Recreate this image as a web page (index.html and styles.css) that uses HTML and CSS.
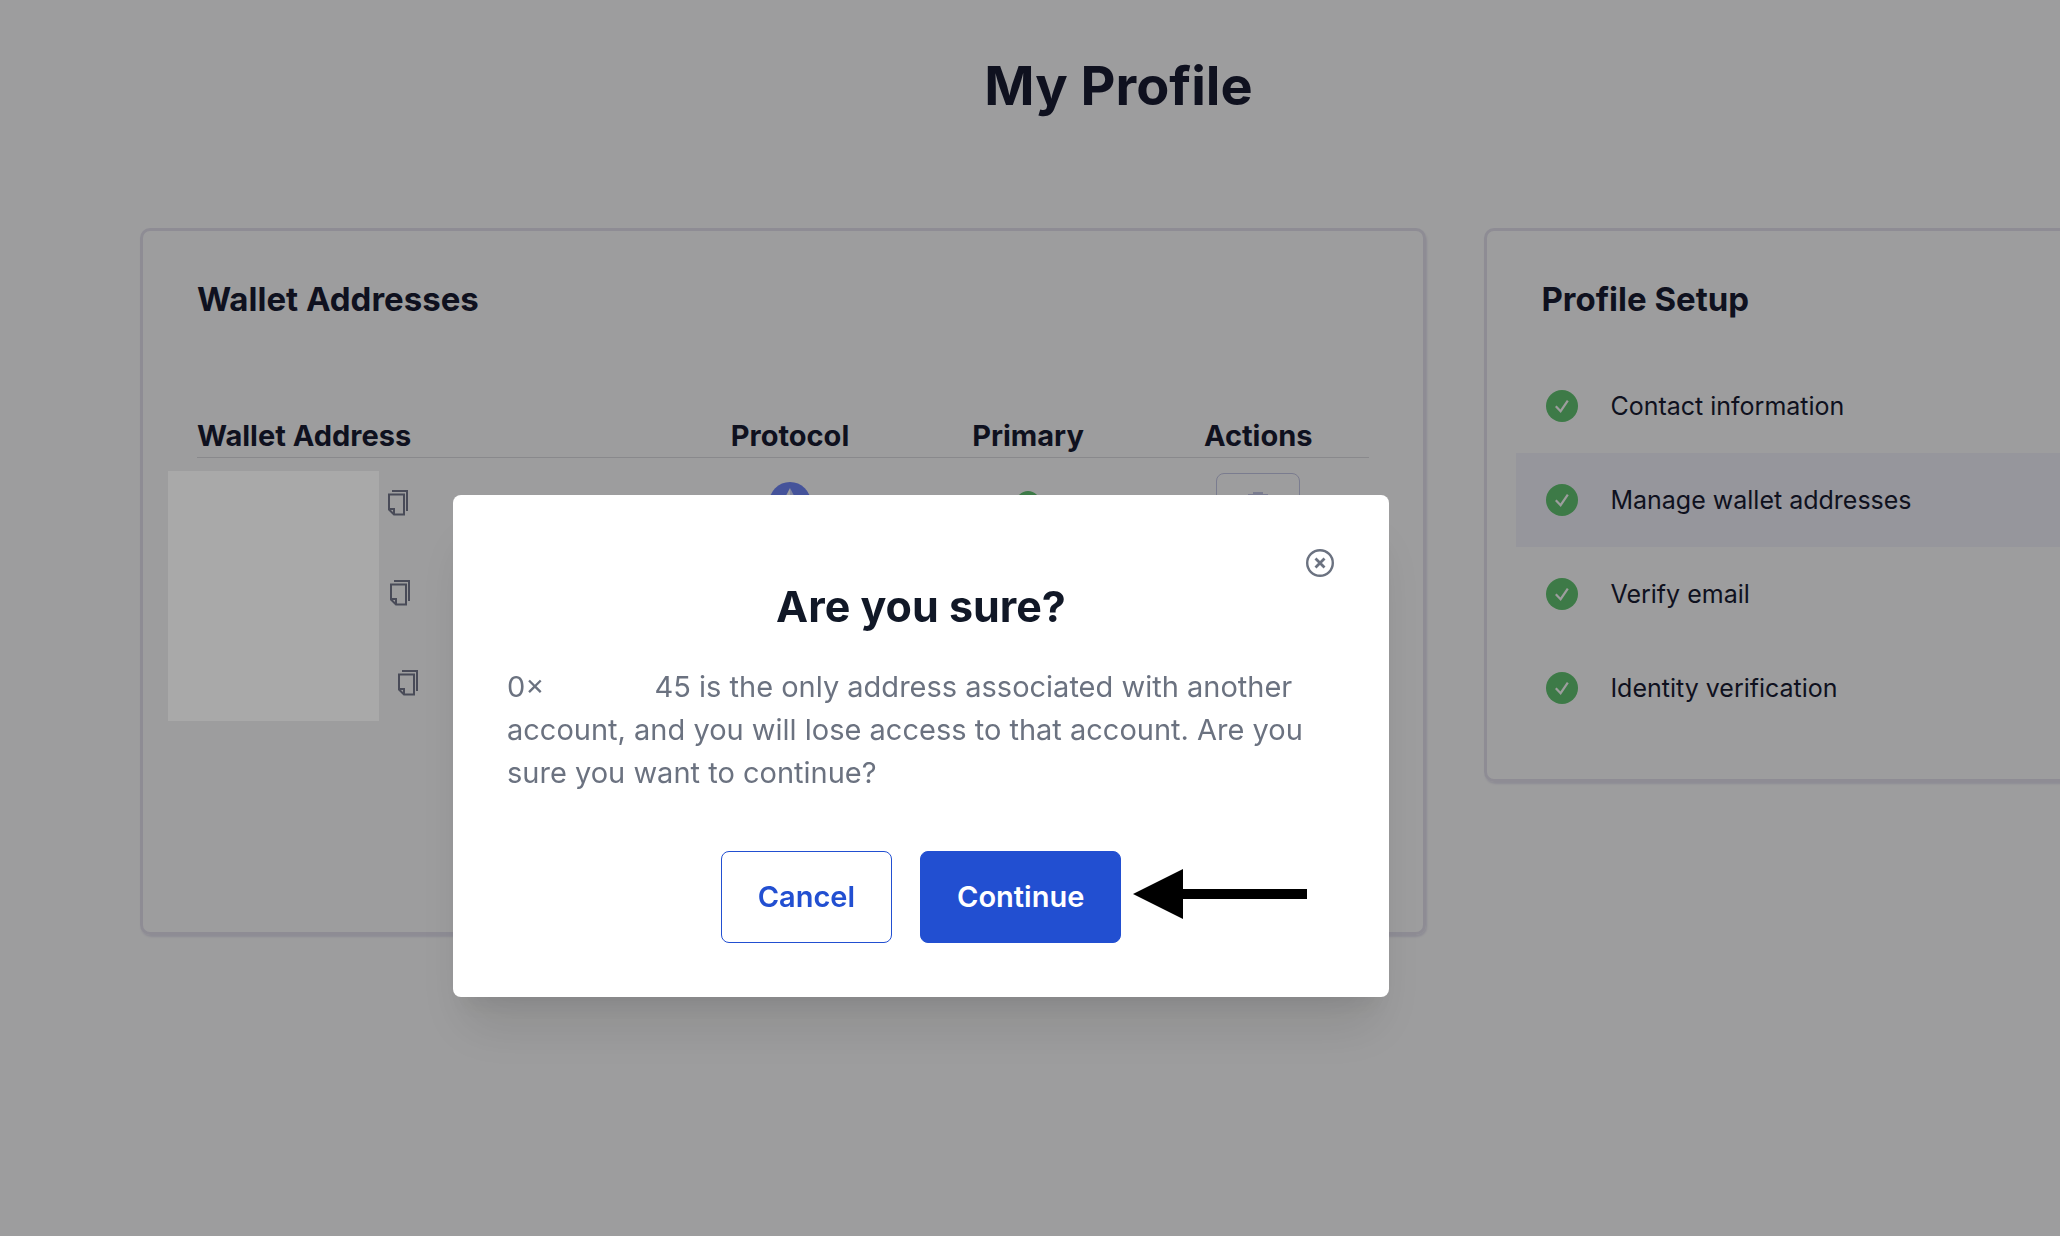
FILE: index.html
```html
<!DOCTYPE html>
<html lang="en">
<head>
    <meta charset="UTF-8">
    <title>My Profile</title>
    <link rel="stylesheet" href="styles.css">
</head>
<body>
    <svg class="sprite" aria-hidden="true">
        <symbol id="check" viewBox="0 0 32 32">
            <circle cx="16" cy="16" r="16" fill="#5cb96b"/>
            <path d="M9.800 16.200l4.800 5 7.200-10.600" fill="none" stroke="#ededee" stroke-width="2.200"/>
        </symbol>
        <symbol id="copy" viewBox="0 0 22 28">
            <path d="M2 5.500h15v20H7l-5-5zM2 20h5v5.500M5 2h15v20" fill="none" stroke="#6f7285" stroke-width="2"/>
        </symbol>
    </svg>

    <main class="page">
        <h1>My Profile</h1>
        <div class="cards">
            <section class="card">
                <h2>Wallet Addresses</h2>
                <table class="wallets">
                    <thead>
                        <tr>
                            <th class="col-address">Wallet Address</th>
                            <th class="col-mid">Protocol</th>
                            <th class="col-mid">Primary</th>
                            <th>Actions</th>
                        </tr>
                    </thead>
                    <tbody>
                        <tr>
                            <td>
                                <div class="address"><button class="copy" aria-label="Copy address"><svg><use href="#copy"/></svg></button></div>
                                <div class="mask"></div>
                            </td>
                            <td>
                                <svg class="eth" viewBox="0 0 42 42">
                                    <circle cx="21" cy="21" r="21" fill="#697de8"/>
                                    <path d="M21 6v11.500l-8 4z" fill="#ededee"/>
                                    <path d="M21 6l8 15.500-8-4z" fill="#c3c9ee"/>
                                    <path d="M13 23l8 4.500 8-4.500-8 12z" fill="#dfe2f2"/>
                                </svg>
                            </td>
                            <td><svg class="primary"><use href="#check"/></svg></td>
                            <td>
                                <button class="remove" aria-label="Remove address">
                                    <svg viewBox="0 0 24 24"><path d="M7 1h10v2h5v3H2V3h5zM4 8h16l-1 15H5z" fill="#b9bbd8"/></svg>
                                </button>
                            </td>
                        </tr>
                        <tr>
                            <td><div class="address address-mid"><button class="copy" aria-label="Copy address"><svg><use href="#copy"/></svg></button></div></td>
                            <td></td><td></td><td></td>
                        </tr>
                        <tr>
                            <td><div class="address address-long"><button class="copy" aria-label="Copy address"><svg><use href="#copy"/></svg></button></div></td>
                            <td></td><td></td><td></td>
                        </tr>
                    </tbody>
                </table>
            </section>

            <section class="card">
                <h2>Profile Setup</h2>
                <ul class="steps">
                    <li><svg><use href="#check"/></svg><a href="#contact">Contact information</a></li>
                    <li class="active"><svg><use href="#check"/></svg><a href="#wallets">Manage wallet addresses</a></li>
                    <li><svg><use href="#check"/></svg><a href="#email">Verify email</a></li>
                    <li><svg><use href="#check"/></svg><a href="#identity">Identity verification</a></li>
                </ul>
            </section>
        </div>
    </main>

    <div class="overlay">
        <div class="modal" role="dialog" aria-modal="true" aria-labelledby="modal-title">
            <button class="close" aria-label="Close">
                <svg viewBox="0 0 28 28" fill="none" stroke="#6b7280">
                    <circle cx="14" cy="14" r="12.800" stroke-width="2.400"/>
                    <path d="M9.500 9.500l9 9M18.500 9.500l-9 9" stroke-width="2.800"/>
                </svg>
            </button>
            <h3 id="modal-title">Are you sure?</h3>
            <p>0×<span class="hidden-part"></span>45 is the only address associated with another account, and you will lose access to that account. Are you sure you want to continue?</p>
            <div class="buttons">
                <button class="btn">Cancel</button>
                <button class="btn btn-main">Continue
                    <svg class="arrow" viewBox="0 0 174 50"><path d="M0 25L50 0v20h124v10H50v20z"/></svg>
                </button>
            </div>
        </div>
    </div>
</body>
</html>
```
FILE: styles.css
```css
* {
    box-sizing: border-box;
}
body {
    margin: 0;
    min-height: 100vh;
    overflow: hidden;
    background: #ededee;
    color: #171a30;
    font-family: Inter, "Liberation Sans", sans-serif;
    font-size: 29px;
}
h1, h2, h3, p, ul {
    margin: 0;
    padding: 0;
}
button {
    font: inherit;
    padding: 0;
    border: none;
    background: none;
    cursor: pointer;
}
svg {
    display: block;
}
.sprite {
    display: none;
}

/* page is wider than the window, the right card runs off */
.page {
    margin-right: -177px;
    padding: 52px 140px;
}
h1 {
    font-size: 54px;
    line-height: 68px;
    text-align: center;
}
.cards {
    display: grid;
    grid-template-columns: 21fr 10fr;
    gap: 58px;
    align-items: start;
    margin-top: 108px;
}
.card {
    padding: 48px 54px 44px;
    border: 3px solid #d6d4e0;
    border-radius: 10px;
    box-shadow: 1px 2px 2px #d6d4e0;
}
h2 {
    font-size: 33px;
    line-height: 40px;
}

.wallets {
    width: 100%;
    margin: 94px 0 160px;
    table-layout: fixed;
    border-collapse: collapse;
}
.wallets th {
    height: 44px;
    padding: 2px 0 0;
    border-bottom: 1px solid #cfcfd4;
    line-height: 42px;
}
.wallets td {
    position: relative;
    height: 90px;
    padding: 0;
}
.wallets .col-address {
    width: 474px;
    text-align: left;
}
.col-mid {
    width: 238px;
}
.address {
    padding-left: 190px;
}
.address-mid {
    padding-left: 192px;
}
.address-long {
    padding-left: 200px;
}
.copy {
    display: block;
}
.copy svg {
    width: 22px;
    height: 28px;
}
.mask {
    position: absolute;
    left: -29px;
    top: 13px;
    width: 211px;
    height: 250px;
    background: #fff;
}
.eth {
    width: 42px;
    height: 42px;
    margin: 0 auto;
}
.primary {
    width: 24px;
    height: 24px;
    margin: 0 auto;
}
.remove {
    display: flex;
    align-items: center;
    justify-content: center;
    width: 84px;
    height: 60px;
    margin: 0 auto;
    border: 1px solid #b9bbd8;
    border-radius: 8px;
}
.remove svg {
    width: 24px;
    height: 24px;
}

.steps {
    margin: 40px -25px 0;
    list-style: none;
    font-size: 25px;
}
.steps li {
    display: flex;
    align-items: center;
    gap: 32px;
    height: 94px;
    padding: 0 30px;
}
.steps svg {
    width: 32px;
    height: 32px;
}
.steps a {
    color: inherit;
    text-decoration: none;
}
.steps .active {
    background: #e3e2eb;
}

.overlay {
    position: fixed;
    inset: 0;
    display: flex;
    align-items: center;
    justify-content: center;
    padding: 256px 218px 0 0;
    background: rgba(0, 0, 0, 0.336);
}
.modal {
    position: relative;
    width: 100%;
    max-width: 936px;
    padding: 84px 54px 54px;
    border-radius: 8px;
    background: #fff;
    box-shadow: 0 40px 50px -10px rgba(0, 0, 0, 0.1), 0 20px 20px -10px rgba(0, 0, 0, 0.06);
}
.close {
    position: absolute;
    top: 54px;
    right: 55px;
}
.close svg {
    width: 28px;
    height: 28px;
}
.modal h3 {
    color: #111827;
    font-size: 43px;
    line-height: 54px;
    text-align: center;
}
.modal p {
    margin-top: 32px;
    color: #6b7280;
    line-height: 43px;
}
.hidden-part {
    display: inline-block;
    width: 110px;
}
.buttons {
    display: flex;
    justify-content: center;
    gap: 28px;
    margin-top: 57px;
}
.btn {
    position: relative;
    padding: 0 36px;
    border: 1px solid #224fd1;
    border-radius: 8px;
    color: #224fd1;
    font-weight: 600;
    line-height: 90px;
}
.btn-main {
    background: #224fd1;
    color: #fff;
}
.arrow {
    position: absolute;
    left: calc(100% + 13px);
    top: 17px;
    width: 174px;
    height: 50px;
}
```
